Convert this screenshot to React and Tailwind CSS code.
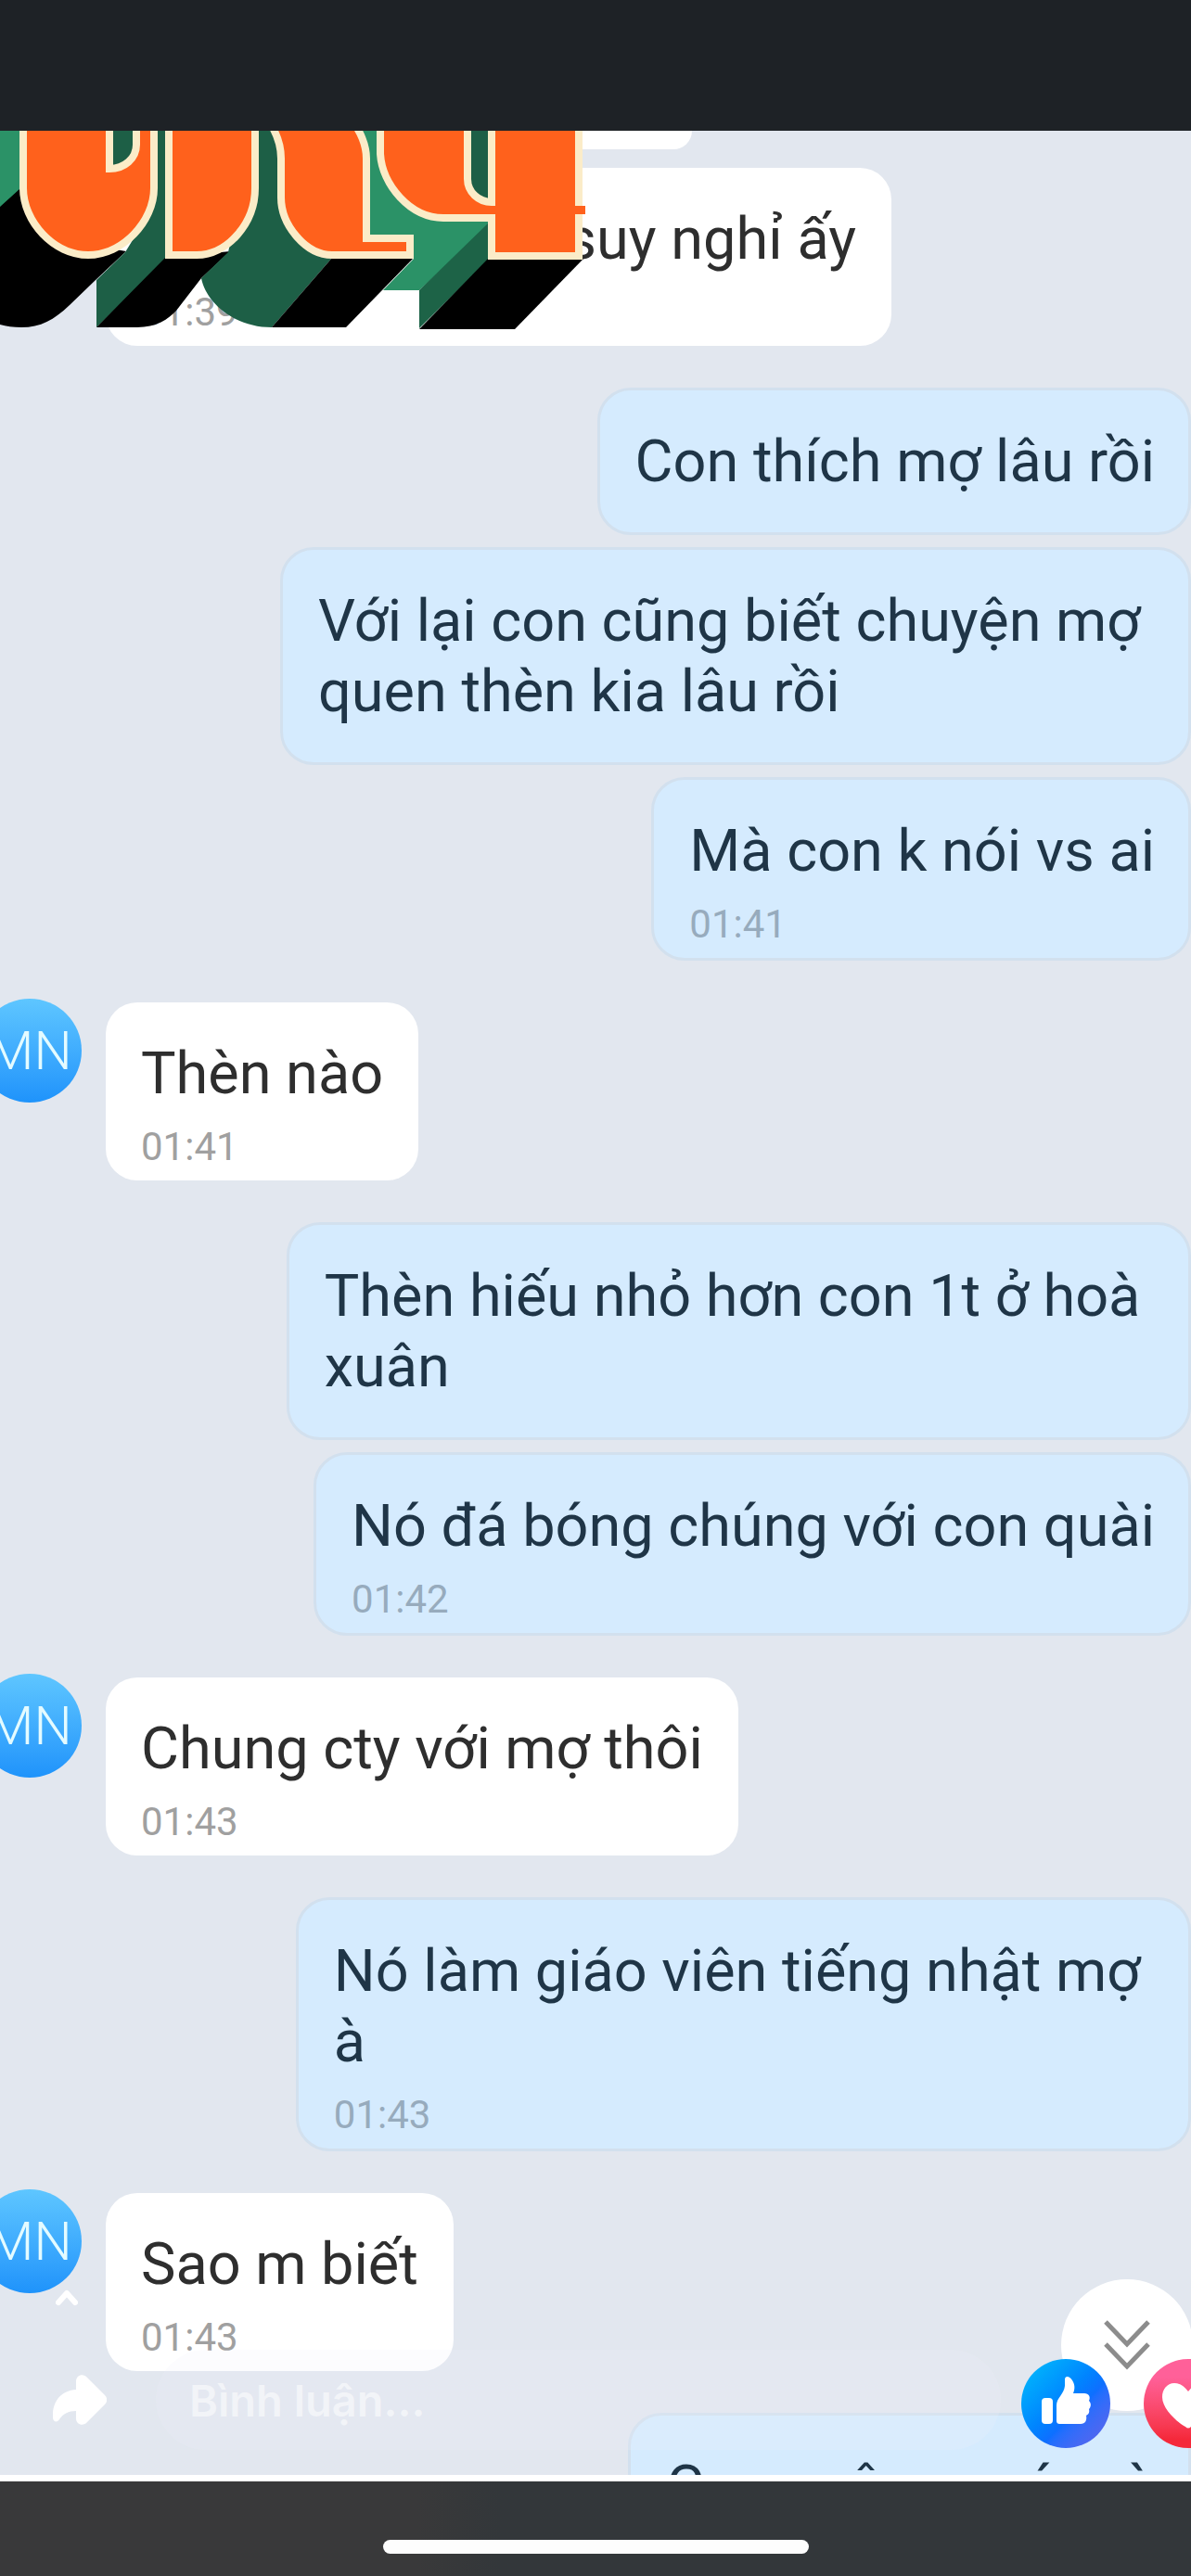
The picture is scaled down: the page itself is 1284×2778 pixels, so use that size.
const messages = [
  { from: "them", text: "suy nghỉ ấy", time: "01:39", wide: true },
  { from: "me", text: "Con thích mợ lâu rồi" },
  { from: "me", text: "Với lại con cũng biết chuyện mợ \nquen thèn kia lâu rồi" },
  { from: "me", text: "Mà con k nói vs ai", time: "01:41" },
  { from: "them", text: "Thèn nào", time: "01:41", avatar: true },
  { from: "me", text: "Thèn hiếu nhỏ hơn con 1t ở hoà \nxuân" },
  { from: "me", text: "Nó đá bóng chúng với con quài", time: "01:42" },
  { from: "them", text: "Chung cty với mợ thôi", time: "01:43", avatar: true },
  { from: "me", text: "Nó làm giáo viên tiếng nhật mợ \nà", time: "01:43" },
  { from: "them", text: "Sao m biết", time: "01:43", avatar: true },
  { from: "me", text: "Con quên m có mà" },
];

function Avatar() {
  return (
    <div className="-mt-1 flex size-28 shrink-0 items-center justify-center rounded-full bg-linear-to-b from-[#5ec6ff] to-[#1e93fb] text-[58px] font-light text-[#e4fbff]">
      MN
    </div>
  );
}

function TheirMessage({ message }) {
  return (
    <div className="-ml-6 flex items-start gap-[26px]">
      {message.avatar ? <Avatar /> : <div className="w-28 shrink-0" />}
      <div
        className={`rounded-[34px] bg-white px-[38px] pt-[39px] pb-[11px] text-[#2e2e2e] ${
          message.wide ? "w-[847px] text-right" : ""
        }`}
      >
        <p className="text-[63px] leading-[76px] whitespace-pre">{message.text}</p>
        <time className="mt-4 block text-left text-[42px] leading-[50px] text-[#a0a0a0]">
          {message.time}
        </time>
      </div>
    </div>
  );
}

function MyMessage({ message }) {
  return (
    <div className="flex justify-end">
      <div
        className={`rounded-[36px] border-[3px] border-[#d2e0ee] bg-[#d5ebfe] pt-[39px] pr-9 pl-[38px] text-[#1f3547] ${
          message.time ? "pb-[11px]" : "pb-[38px]"
        }`}
      >
        <p className="text-[63px] leading-[76px] whitespace-pre">{message.text}</p>
        {message.time && (
          <time className="mt-4 block text-[42px] leading-[50px] text-[#97abbd]">{message.time}</time>
        )}
      </div>
    </div>
  );
}

function StickerLogo() {
  return (
    <svg
      viewBox="0 0 640 220"
      className="absolute top-0 left-0 w-[640px]"
      aria-hidden="true"
    >
      {/* extruded sides */}
      <path d="M0 0H24V66L0 84Z" fill="#2b9267" />
      <path d="M0 82L21 63L80 120L136 130L103 161L75 188C58 204 44 212 23 212Q10 212 0 209Z" fill="#000" />
      <path d="M135 131L160 90V0H182V136L104 212V161Z" fill="#1d5f46" />
      <path d="M178 137L104 212H148C168 212 182 203 190 194L217 159L248 130Z" fill="#000" />
      <path d="M274 0H303V90L358 137L293 212C252 212 222 185 217 159L246 131Z" fill="#1d5f46" />
      <path d="M358 137H446L373 212H293Z" fill="#000" />
      <path d="M390 0H412L450 80L528 96V102L452 172H413L446 138V112H395Z" fill="#2b9267" />
      <path d="M528 98V138L452 213V172Z" fill="#1d6347" />
      <path d="M526 138H629L555 214H452Z" fill="#000" />

      {/* faces */}
      <g fill="#ff611c" stroke="#fbecc8" strokeWidth="8">
        <path d="M25 -10V62C25 98 58 134 95 134C132 134 166 98 166 62V-10Z" />
        <path d="M182 -10V134H212C245 134 275 100 275 62V-10Z" />
        <path d="M290 -10C298 2 303 14 303 30V72C303 102 330 134 358 134H442V116H395V30C395 15 388 0 380 -10Z" />
        <path d="M410 -10V25C412 58 442 94 478 94H530V135H624V-10Z" />
        <path d="M118 -10V41C134 41 147 30 147 15V-10Z" fill="#1d5f46" />
        <path d="M504 -10V52C504 66 516 77 530 77V-10Z" fill="#1d5f46" />
      </g>
      <path d="M534 81H631V90H534Z" fill="#ff611c" />
    </svg>
  );
}

function ScrollDownButton() {
  return (
    <button
      type="button"
      aria-label="Cuộn xuống"
      className="absolute -right-0.5 bottom-[69px] flex size-[142px] items-center justify-center rounded-full bg-white"
    >
      <svg viewBox="0 0 52 56" className="h-14 w-13" fill="none" stroke="#8c8c8c" strokeWidth="5">
        <path d="M3 3L26 27L49 3M3 27L26 51L49 27" />
      </svg>
    </button>
  );
}

function ShareIcon() {
  return (
    <svg viewBox="0 0 58 54" className="h-[54px] w-[58px]" fill="#fff">
      <path d="M25 16V7C25 0 33 -2 37 3L56 22C59 25 59 29 56 32L37 51C33 56 25 54 25 47V39C17 39 11 42 7 48C5 52 0 51 0 46C-1 30 8 17 25 16Z" />
    </svg>
  );
}

function CommentBar() {
  return (
    <div className="absolute -right-[45px] bottom-[27px] left-[57px] flex items-center">
      <button type="button" aria-label="Chia sẻ" className="shrink-0">
        <ShareIcon />
      </button>
      <input
        type="text"
        aria-label="Bình luận"
        placeholder="Bình luận..."
        className="mr-[22px] ml-[53px] h-[108px] min-w-0 flex-1 rounded-full bg-[#f0eefa]/20 px-9 font-[Inter,sans-serif] text-[47px] font-semibold text-white outline-none placeholder:text-[#f2f4f8]"
      />
      <div className="flex shrink-0 gap-9 pt-2">
        <button
          type="button"
          aria-label="Thích"
          className="size-24 rounded-full bg-linear-to-br from-[#02adfc] from-15% via-[#0e6fff] via-60% to-[#5f62e8]"
        >
          <svg viewBox="0 0 96 96" className="size-24" fill="#fff">
            <rect x="22" y="42" width="12" height="28" rx="4" />
            <path d="M38 66V50C38 42 46 38 47 29V22C47 18 52 18 55 23C58 28 58 32 56 37H68C73 37 75 41 73 45C76 48 75 52 73 54C74 58 72 60 70 61C71 66 69 70 64 70H42C39 70 38 69 38 66Z" />
          </svg>
        </button>
        <button
          type="button"
          aria-label="Yêu thích"
          className="size-24 rounded-full bg-linear-to-b from-[#ff6099] from-20% to-[#f5283a] to-90%"
        >
          <svg viewBox="0 0 96 96" className="size-24" fill="#fff">
            <path d="M48 35C43 28 38 26 33 26C25 26 20 33 20 41C20 54 36 68 45 73C47 75 49 75 51 73C60 68 76 54 76 41C76 33 71 26 63 26C58 26 53 28 48 35Z" />
          </svg>
        </button>
      </div>
    </div>
  );
}

export default function App() {
  return (
    <div className="flex h-screen flex-col bg-[#1e2226] font-[Roboto,sans-serif]">
      <header className="h-[141px] shrink-0" />

      <main className="relative min-h-0 flex-1 overflow-hidden border-b-[7px] border-white bg-[#e2e7ef]">
        <div className="ml-[114px] h-5 w-[632px] rounded-b-[34px] bg-white" />

        <ul className="mt-5 flex flex-col">
          {messages.map((message, i) => {
            const sameSender = i > 0 && messages[i - 1].from === message.from;
            const space = i === 0 ? "" : sameSender ? "mt-[13px]" : "mt-[45px]";
            return (
              <li key={i} className={space}>
                {message.from === "me" ? (
                  <MyMessage message={message} />
                ) : (
                  <TheirMessage message={message} />
                )}
              </li>
            );
          })}
        </ul>

        <StickerLogo />
        <ScrollDownButton />

        <svg
          viewBox="0 0 24 18"
          className="absolute bottom-[182px] left-[60px] h-[18px] w-6"
          fill="none"
          stroke="#fff"
          strokeWidth="6"
          strokeLinecap="round"
          strokeLinejoin="round"
        >
          <path d="M3 14L12 4L21 14" />
        </svg>
        <CommentBar />
      </main>

      <footer className="flex h-[102px] shrink-0 items-end justify-center bg-linear-to-r from-[#39393a] from-35% to-[#33373a] to-42% pb-6">
        <div className="h-[15px] w-[459px] rounded-full bg-[#fdfdfd]" />
      </footer>
    </div>
  );
}
